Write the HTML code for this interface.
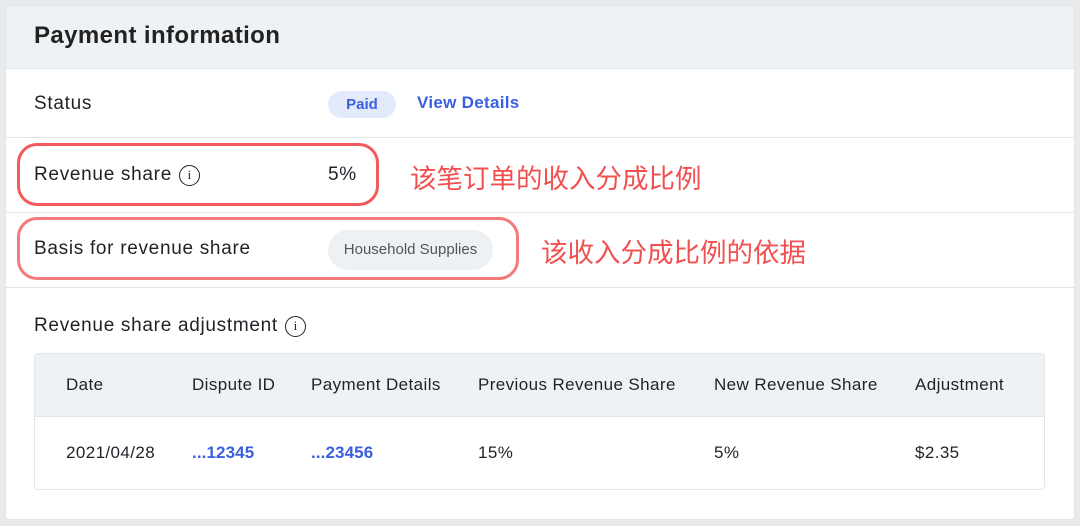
<!DOCTYPE html>
<html><head><meta charset="utf-8"><style>
*{margin:0;padding:0;box-sizing:border-box}
body{width:1080px;height:526px;background:#e9eaec;font-family:"Liberation Sans","Noto Sans CJK SC",sans-serif;color:#1f2328;position:relative;overflow:hidden}
.card{position:absolute;left:5px;top:5px;width:1070px;height:515px;background:#fff;border:1px solid #e3e6e9;border-radius:4px;overflow:hidden}
.hdr{position:absolute;left:0;top:0;width:100%;height:63px;background:#eef2f5;border-bottom:1px solid #e3e7ea}
.hdr span{position:absolute;left:28px;top:16px;font-size:24px;font-weight:bold;color:#222;letter-spacing:.4px}
.line{position:absolute;left:0;width:100%;height:1px;background:#e2e6e9}
.t{position:absolute;font-size:19px;white-space:nowrap;letter-spacing:.7px;display:flex;align-items:center;height:22px}
.box{position:absolute;border:3px solid #f25a5c;border-radius:20px}
.cn{position:absolute;font-size:26.5px;color:#f0504f;white-space:nowrap}
.info{display:inline-block;width:21px;height:21px;border:1.6px solid #222;border-radius:50%;font-size:13px;text-align:center;line-height:18px;margin-left:7px;font-family:"Liberation Serif",serif;letter-spacing:0}
.tbl{position:absolute;left:28px;top:347px;width:1011px;height:137px;border:1px solid #e2e6e9;border-radius:4px;overflow:hidden}
.th{position:absolute;left:0;top:0;width:100%;height:63px;background:#eef2f5;border-bottom:1px solid #e2e6e9}
.c{position:absolute;font-size:17px;white-space:nowrap;letter-spacing:.4px}
.blue{color:#3a5fe0;font-weight:bold;letter-spacing:.1px}
</style></head><body>
<div class="card">
<div class="hdr"><span>Payment information</span></div>
<div class="t" style="left:28px;top:87px">Status</div>
<div style="position:absolute;left:322px;top:85px;width:68px;height:27px;background:#e3eafb;border-radius:14px;color:#3a5fe0;font-weight:bold;font-size:15px;text-align:center;line-height:27px">Paid</div>
<div class="t" style="left:411px;top:86px;color:#3a5fe0;font-weight:bold;font-size:17px;letter-spacing:.3px">View Details</div>
<div class="line" style="top:131px"></div>
<div class="t" style="left:28px;top:158px">Revenue share<span class="info">i</span></div>
<div class="t" style="left:322px;top:158px">5%</div>
<div class="line" style="top:206px"></div>
<div class="t" style="left:28px;top:232px">Basis for revenue share</div>
<div style="position:absolute;left:322px;top:224px;width:165px;height:40px;background:#eef1f4;border-radius:20px;color:#555;font-size:15px;text-align:center;line-height:40px">Household Supplies</div>
<div class="line" style="top:281px"></div>
<div class="t" style="left:28px;top:309px">Revenue share adjustment<span class="info">i</span></div>
<div class="tbl"><div class="th"></div>
<div class="c" style="left:31px;top:21px">Date</div>
<div class="c" style="left:157px;top:21px">Dispute ID</div>
<div class="c" style="left:276px;top:21px">Payment Details</div>
<div class="c" style="left:443px;top:21px">Previous Revenue Share</div>
<div class="c" style="left:679px;top:21px">New Revenue Share</div>
<div class="c" style="left:880px;top:21px">Adjustment</div>
<div class="c" style="left:31px;top:89px">2021/04/28</div>
<div class="c blue" style="left:157px;top:89px">...12345</div>
<div class="c blue" style="left:276px;top:89px">...23456</div>
<div class="c" style="left:443px;top:89px">15%</div>
<div class="c" style="left:679px;top:89px">5%</div>
<div class="c" style="left:880px;top:89px">$2.35</div>
</div>
</div>
<div class="box" style="left:17px;top:143px;width:362px;height:63px"></div>
<div class="box" style="left:17px;top:217px;width:502px;height:63px;border-color:#f47a7c"></div>
<div class="cn" style="left:410px;top:157px">该笔订单的收入分成比例</div>
<div class="cn" style="left:541px;top:231px">该收入分成比例的依据</div>
</body></html>
